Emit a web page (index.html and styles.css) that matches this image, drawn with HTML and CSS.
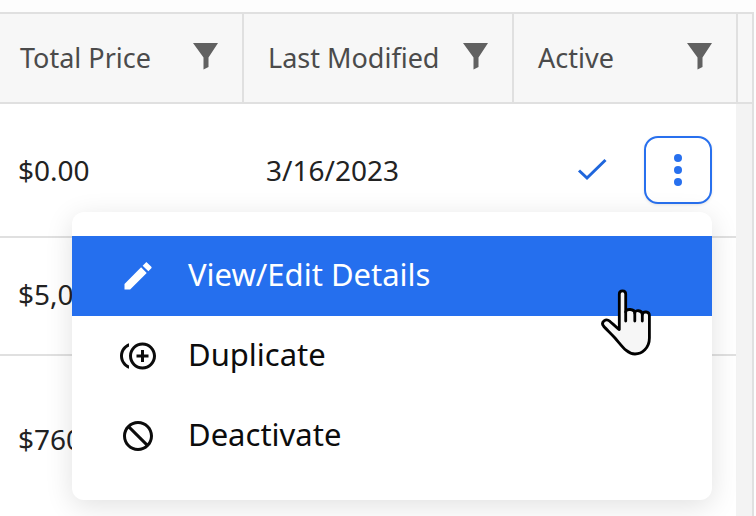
FILE: index.html
```html
<!DOCTYPE html>
<html lang="en">
<head>
<meta charset="utf-8">
<title>Table actions</title>
<link rel="stylesheet" href="styles.css">
</head>
<body>
<div class="page">
  <div class="table">
    <div class="row head">
      <div class="hcell col1"><span>Total Price</span><svg class="filter" viewBox="0 0 25 27"><path d="M0 0H25L15.5 14.5V24L10.5 26.5V14.5Z"/></svg></div>
      <div class="hcell col2"><span>Last Modified</span><svg class="filter" viewBox="0 0 25 27"><path d="M0 0H25L15.5 14.5V24L10.5 26.5V14.5Z"/></svg></div>
      <div class="hcell col3"><span>Active</span><svg class="filter" viewBox="0 0 25 27"><path d="M0 0H25L15.5 14.5V24L10.5 26.5V14.5Z"/></svg></div>
      <div class="gutter"></div>
    </div>
    <div class="row body r1">
      <div class="cell col1">$0.00</div>
      <div class="cell col2">3/16/2023</div>
      <div class="cell col3 actions">
        <svg class="check" viewBox="0 0 32 24"><path d="M2 12.5L10 20L28.5 2"/></svg>
        <button class="more" type="button"><i></i><i></i><i></i></button>
      </div>
      <div class="gutter"></div>
    </div>
    <div class="row body r2">
      <div class="cell col1">$5,000.00</div>
      <div class="cell col2"></div>
      <div class="cell col3"></div>
      <div class="gutter"></div>
    </div>
    <div class="row body r3">
      <div class="cell col1">$760.00</div>
      <div class="cell col2"></div>
      <div class="cell col3"></div>
      <div class="gutter"></div>
    </div>
  </div>
  <ul class="menu">
    <li class="item active"><svg class="ico" viewBox="0 0 24 24"><path d="M3 17.25V21h3.75L17.81 9.94l-3.75-3.75L3 17.25zM20.9 6.9c.3-.3.3-.7 0-1l-2.8-2.8c-.3-.3-.7-.3-1 0l-2 2 3.8 3.8 2-2z"/></svg><span>View/Edit Details</span></li>
    <li class="item"><svg class="ico" viewBox="0 0 24 24"><path d="M16 8h-2v3h-3v2h3v3h2v-3h3v-2h-3zM2 12c0-2.79 1.64-5.2 4.01-6.32V3.52C2.52 4.76 0 8.09 0 12s2.52 7.24 6.01 8.48v-2.16C3.64 17.2 2 14.79 2 12zm13-9c-4.96 0-9 4.04-9 9s4.04 9 9 9 9-4.04 9-9-4.04-9-9-9zm0 16c-3.86 0-7-3.14-7-7s3.14-7 7-7 7 3.14 7 7-3.14 7-7 7z"/></svg><span>Duplicate</span></li>
    <li class="item"><svg class="ico" viewBox="0 0 24 24"><path transform="matrix(-1 0 0 1 24 0)" d="M12 2C6.48 2 2 6.48 2 12s4.48 10 10 10 10-4.48 10-10S17.52 2 12 2zM4 12c0-4.42 3.58-8 8-8 1.85 0 3.55.63 4.9 1.69L5.69 16.9C4.63 15.55 4 13.85 4 12zm8 8c-1.85 0-3.55-.63-4.9-1.69L18.31 7.1C19.37 8.45 20 10.15 20 12c0 4.42-3.58 8-8 8z"/></svg><span>Deactivate</span></li>
  </ul>
  <svg class="cursor" viewBox="0 0 54 68"><path class="hand" d="M19.3 41.5V6C19.3 1.8 25.7 1.8 25.7 6V24C26 20.5 34.3 20.5 34.8 25C35 21.5 42 22 42.3 26.5C43 23 49.4 23 49.4 27.5V50C49.4 60 42 66 35 66C27 66 22 58 15 50C11 45.5 6 41 3.5 38C.5 34 6 30 9.5 33C13 36 16.5 39.5 19.3 41.5Z"/><path class="hand" d="M25.7 24V33M34.8 25V33M42.3 26.5V33"/></svg>
</div>
</body>
</html>
```

FILE: styles.css
```css
* { box-sizing: border-box; }
html, body { margin: 0; padding: 0; }
body {
  width: 756px;
  height: 516px;
  overflow: hidden;
  background: #fff;
  font-family: "Noto Sans", "Lato", sans-serif;
}
.page { position: relative; width: 756px; height: 516px; overflow: hidden; padding-top: 12px; background: #fdfdfd; }
.table { width: 754px; border-top: 2px solid #e0e0e0; border-right: 2px solid #e0e0e0; background: #fff; }
.row { display: grid; grid-template-columns: 244px 270px 222px 16px; }
.head { height: 90px; grid-template-columns: 244px 270px 224px 14px; background: #f7f7f7; border-bottom: 2px solid #e0e0e0; }
.hcell {
  display: flex;
  align-items: center;
  justify-content: space-between;
  border-right: 2px solid #e0e0e0;
  font-size: 27px;
  color: #4b4b4b;
  padding: 0 24px 2px 24px;
}
.hcell.col1 { padding-left: 20px; }
.filter { width: 25px; height: 27px; fill: #616161; flex: none; margin-top: -1px; }
.gutter { background: #f3f3f3; }
.head .gutter { background: #f7f7f7; }
.body .cell { display: flex; align-items: center; font-size: 28px; color: #222; padding-left: 22px; border-bottom: 2px solid #e0e0e0; }
.body .cell.col1 { padding-left: 18px; }
.body .cell.actions { padding: 0 24px 0 0; justify-content: flex-end; gap: 35px; }
.r1 { height: 134px; }
.r2 { height: 118px; }
.r2 .cell { padding-bottom: 4px; }
.r3 { height: 168px; }
.r3 .cell { border-bottom: 0; padding-bottom: 2px; }
.check { width: 32px; height: 24px; fill: none; stroke: #1f66dc; stroke-width: 3; margin-top: -1px; }
.more {
  width: 68px;
  height: 68px;
  padding: 0;
  background: #fff;
  border: 2px solid #2870ee;
  border-radius: 14px;
  display: flex;
  flex-direction: column;
  align-items: center;
  justify-content: center;
  gap: 4px;
  box-shadow: 0 1px 3px rgba(0,0,0,.1);
}
.more i { display: block; width: 8px; height: 8px; border-radius: 50%; background: #2870ee; }
.menu {
  position: absolute;
  left: 72px;
  top: 212px;
  width: 640px;
  margin: 0;
  padding: 24px 0;
  list-style: none;
  background: #fff;
  border-radius: 12px;
  box-shadow: 0 6px 28px rgba(0,0,0,.12);
}
.item { display: flex; align-items: center; gap: 32px; height: 80px; padding-left: 48px; font-size: 31px; color: #0c0c0c; }
.item span { margin-top: -4px; }
.item.active { background: #256fee; color: #fff; }
.ico { width: 36px; height: 36px; fill: currentColor; flex: none; }
.cursor { position: absolute; left: 600px; top: 288px; width: 54px; height: 68px; }
.hand { fill: #f6f6f6; stroke: #000; stroke-width: 2.8; stroke-linejoin: round; stroke-linecap: round; }
```
